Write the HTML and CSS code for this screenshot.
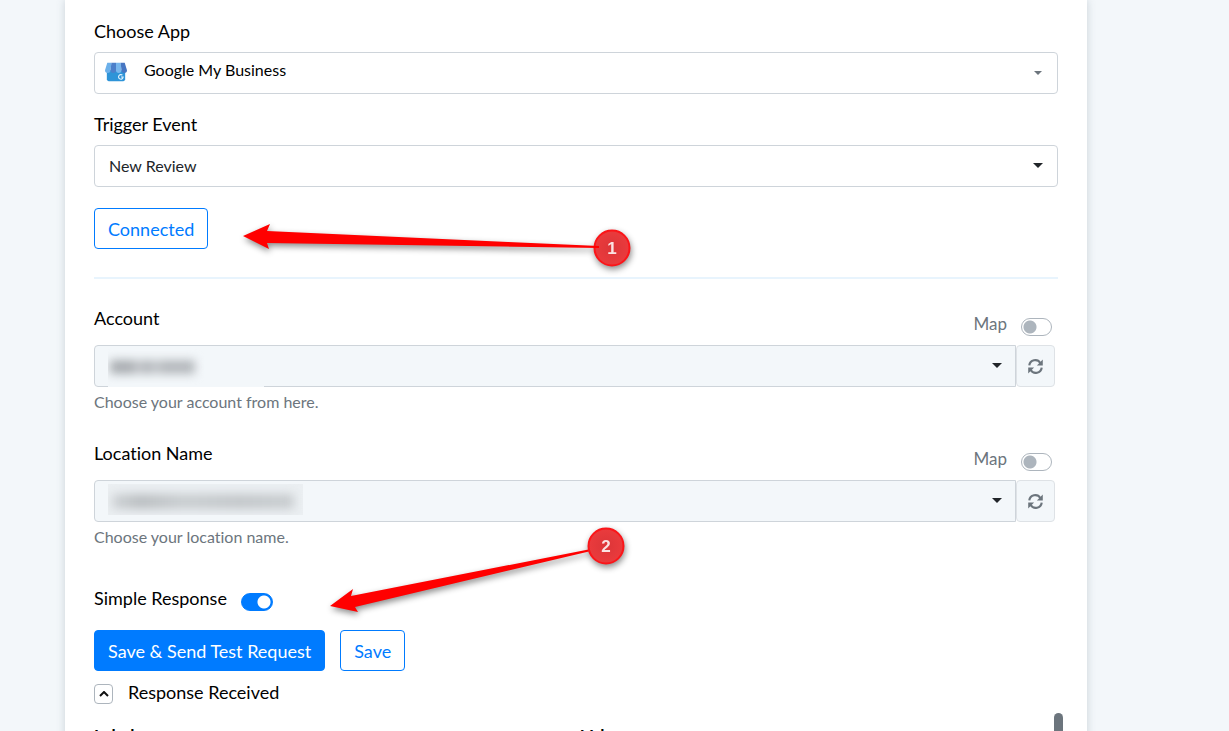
FILE: index.html
```html
<!DOCTYPE html>
<html lang="en">
<head>
  <meta charset="UTF-8">
  <title>Workflow Trigger</title>
  <link rel="stylesheet" href="styles.css">
</head>
<body>

<main class="card">
  <div class="field">
    <label for="app">Choose App</label>
    <div class="select-wrap app-select">
      <svg class="app-icon" width="22" height="20" viewBox="0 0 24 20" aria-hidden="true">
        <path d="M2 8h20v10q0 2-2 2H4q-2 0-2-2z" fill="#2e94d8"/>
        <path d="M2.500 0H7L6 8a3 3 0 0 1-6 0z" fill="#6cb0ea"/>
        <path d="M7 0h5v8a3 3 0 0 1-6 0z" fill="#4c7fca"/>
        <path d="M12 0h5l1 8a3 3 0 0 1-6 0z" fill="#78b7ed"/>
        <path d="M17 0h4.500L24 8a3 3 0 0 1-6 0z" fill="#4776c2"/>
        <path d="M19 13.500a2.500 2.500 0 1 0 .8 2H17.500" fill="none" stroke="#e5f5ff" stroke-width="1.200"/>
      </svg>
      <select id="app">
        <option>Google My Business</option>
      </select>
      <span class="caret small"></span>
    </div>
  </div>

  <div class="field">
    <label for="event">Trigger Event</label>
    <div class="select-wrap">
      <select id="event">
        <option>New Review</option>
      </select>
      <span class="caret"></span>
    </div>
  </div>

  <button class="btn btn-outline" type="button">Connected</button>

  <hr>

  <div class="map-field">
    <div class="map-head">
      <label for="account">Account</label>
      <label class="map"><span>Map</span> <input class="switch" type="checkbox"></label>
    </div>
    <div class="group">
      <div class="select-wrap">
        <select id="account">
          <option></option>
        </select>
        <span class="hidden-value account-value"><i></i></span>
        <span class="caret"></span>
      </div>
      <button class="refresh" type="button" aria-label="Refresh accounts">
        <svg width="15" height="15" viewBox="0 0 14 14" fill="none" stroke="#6c757d" stroke-width="2">
          <path d="M1.200 6A5.600 5.600 0 0 1 11.500 3.700M12.800 8A5.600 5.600 0 0 1 2.500 10.300"/>
          <path d="M13.800.5V6H8.300zM.2 13.500V8h5.500z" fill="#6c757d" stroke="none"/>
        </svg>
      </button>
    </div>
    <p class="hint">Choose your account from here.</p>
  </div>

  <div class="map-field">
    <div class="map-head">
      <label for="location">Location Name</label>
      <label class="map"><span>Map</span> <input class="switch" type="checkbox"></label>
    </div>
    <div class="group">
      <div class="select-wrap">
        <select id="location">
          <option></option>
        </select>
        <span class="hidden-value location-value"><i></i></span>
        <span class="caret"></span>
      </div>
      <button class="refresh" type="button" aria-label="Refresh locations">
        <svg width="15" height="15" viewBox="0 0 14 14" fill="none" stroke="#6c757d" stroke-width="2">
          <path d="M1.200 6A5.600 5.600 0 0 1 11.500 3.700M12.800 8A5.600 5.600 0 0 1 2.500 10.300"/>
          <path d="M13.800.5V6H8.300zM.2 13.500V8h5.500z" fill="#6c757d" stroke="none"/>
        </svg>
      </button>
    </div>
    <p class="hint">Choose your location name.</p>
  </div>

  <div class="simple">
    <label for="simple">Simple Response</label>
    <input class="switch" id="simple" type="checkbox" checked>
  </div>

  <div class="actions">
    <button class="btn btn-primary" type="button">Save &amp; Send Test Request</button>
    <button class="btn btn-outline" type="button">Save</button>
  </div>

  <div class="response">
    <button class="toggle" type="button" aria-label="Collapse response">
      <svg width="10" height="6" viewBox="0 0 10 6" fill="none" stroke="#111" stroke-width="2"><path d="M1 5l4-4 4 4"/></svg>
    </button>
    <span>Response Received</span>
  </div>

  <div class="result">
    <table>
      <tr><th>Label</th><th>Value</th></tr>
    </table>
    <span class="thumb"></span>
  </div>

  <!-- numbered pointers over the form -->
  <svg class="pointers" width="600" height="640" viewBox="0 0 600 640" aria-hidden="true">
    <defs>
      <radialGradient id="ball">
        <stop offset="0" stop-color="#dc3538"/>
        <stop offset="1" stop-color="#ea3b3d"/>
      </radialGradient>
    </defs>
    <g class="pointer">
      <circle cx="547" cy="248" r="17.500" fill="url(#ball)" stroke="#fb1519" stroke-width="2"/>
      <path d="M178 236l27-12-3 7 332 15v2l-332-5 2 6z" fill="#f00"/>
      <text x="547" y="254">1</text>
    </g>
    <g class="pointer">
      <path d="M265 606l23-17-2 7 240-47v2L290 607l3 5z" fill="#f00"/>
      <circle cx="541" cy="546" r="17.500" fill="url(#ball)" stroke="#fb1519" stroke-width="2"/>
      <text x="541" y="552">2</text>
    </g>
  </svg>
</main>

</body>
</html>
```

FILE: styles.css
```css
* {
  box-sizing: border-box;
}
body {
  margin: 0;
  height: 100vh;
  overflow: hidden;
  background: #f3f7fa;
  color: #000;
  font-family: Lato, sans-serif;
  font-size: 18px;
  line-height: 24px;
  font-variant-ligatures: none;
}
select, button {
  font: inherit;
}
.card {
  position: relative;
  margin: 0 142px 0 65px;
  padding: 19px 29px 0;
  min-height: 100vh;
  background: #fff;
  box-shadow: 0 0 8px rgba(80, 100, 115, 0.25);
}
.field {
  margin-bottom: 18px;
}
.field > label {
  display: block;
  margin-bottom: 9px;
}
.select-wrap {
  position: relative;
  flex: 1;
}
select {
  display: block;
  width: 100%;
  height: 42px;
  padding: 0 40px 0 14px;
  border: 1px solid #ced4da;
  border-radius: 4px;
  background: #fff;
  color: #212529;
  font-size: 16px;
  appearance: none;
}
.app-select select {
  padding: 0 40px 6px 49px;
  color: #000;
}
.app-icon {
  position: absolute;
  left: 11px;
  top: 10px;
}
.caret {
  position: absolute;
  right: 15px;
  top: 18px;
  border: 5px solid transparent;
  border-top-color: #212529;
  border-bottom: 0;
  pointer-events: none;
}
.caret.small {
  right: 16px;
  top: 19px;
  border-width: 4px 4px 0;
  border-top-color: #6c757d;
}
.btn {
  height: 41px;
  padding: 0 13px;
  border: 1px solid #007bff;
  border-radius: 4px;
  background: #fff;
  color: #007bff;
}
.field + .btn {
  margin-top: 3px;
}
.btn-primary {
  background: #007bff;
  color: #fff;
}
hr {
  height: 2px;
  margin: 28px 0 27px;
  border: 0;
  background: #e8f4fd;
}
.map-field {
  margin-bottom: 27px;
}
.map-head {
  display: flex;
  justify-content: space-between;
  height: 39px;
}
.map {
  display: flex;
  align-items: center;
  gap: 14px;
  padding: 6px 6px 9px 0;
  color: #6c757d;
  font-size: 17px;
}
.switch {
  appearance: none;
  width: 31px;
  height: 18px;
  margin: 5px 0 0;
  border: 1px solid #adb5bd;
  border-radius: 9px;
  background: radial-gradient(circle at 8px 8px, #adb5bd 6px, transparent 7px);
}
.switch:checked {
  border-color: #007bff;
  background: radial-gradient(circle at 22px 8px, #fff 6px, #007bff 7px);
}
.group {
  display: flex;
  margin-right: 3px;
}
.group select {
  border-radius: 4px 0 0 4px;
  background: #f3f7fa;
}
.group .caret {
  right: 14px;
}
.refresh {
  display: flex;
  align-items: center;
  justify-content: center;
  width: 39px;
  padding: 0;
  border: 1px solid #dee2e6;
  border-radius: 4px;
  background: #f3f7fa;
}
.hidden-value {
  position: absolute;
  left: 14px;
  top: 4px;
  overflow: hidden;
  pointer-events: none;
}
.hidden-value i {
  position: absolute;
  filter: blur(5px);
}
.account-value {
  width: 156px;
  height: 38px;
  background: #f3f7fa;
}
.account-value i {
  left: 2px;
  top: 11px;
  width: 85px;
  height: 14px;
  background: linear-gradient(90deg, #a9adb1 28%, #d0d3d6 32%, #b4b8bc 38% 50%, #d0d3d6 54%, #b4b8bc 60%);
}
.location-value {
  width: 195px;
  height: 31px;
  background: #ebeff2;
}
.location-value i {
  left: 4px;
  top: 10px;
  width: 182px;
  height: 15px;
  background: linear-gradient(90deg, #d0d4d7, #babec1 15%, #c9cdd0 40%, #c3c7ca 70%, #c9cdd0);
}
.hint {
  margin: 3px 0 0;
  color: #6c757d;
  font-size: 16px;
}
.simple {
  display: flex;
  gap: 14px;
  margin-top: 37px;
}
.simple .switch {
  width: 32px;
  margin-top: 7px;
}
.actions {
  display: flex;
  gap: 15px;
  margin-top: 19px;
}
.response {
  display: flex;
  gap: 15px;
  margin-top: 9px;
}
.toggle {
  display: flex;
  align-items: center;
  justify-content: center;
  width: 19px;
  height: 20px;
  margin-top: 4px;
  padding: 0;
  border: 1px solid #adb5bd;
  border-radius: 4px;
  background: #fff;
}
.result {
  position: relative;
  margin-top: 20px;
}
.result table {
  width: 100%;
  border-spacing: 0;
  table-layout: fixed;
  font-size: 17px;
}
.result th {
  padding: 0;
  text-align: left;
}
.result th + th {
  padding-left: 5px;
}
.thumb {
  position: absolute;
  right: -5px;
  top: -11px;
  width: 9px;
  height: 60px;
  border-radius: 5px;
  background: #6c757d;
}
.pointers {
  position: absolute;
  left: 0;
  top: 0;
  pointer-events: none;
}
.pointer {
  filter: drop-shadow(1px 3px 3px rgba(0, 0, 0, 0.45));
}
.pointer text {
  fill: #fbe3e3;
  font: bold 17px "Liberation Sans", sans-serif;
  text-anchor: middle;
}
```
